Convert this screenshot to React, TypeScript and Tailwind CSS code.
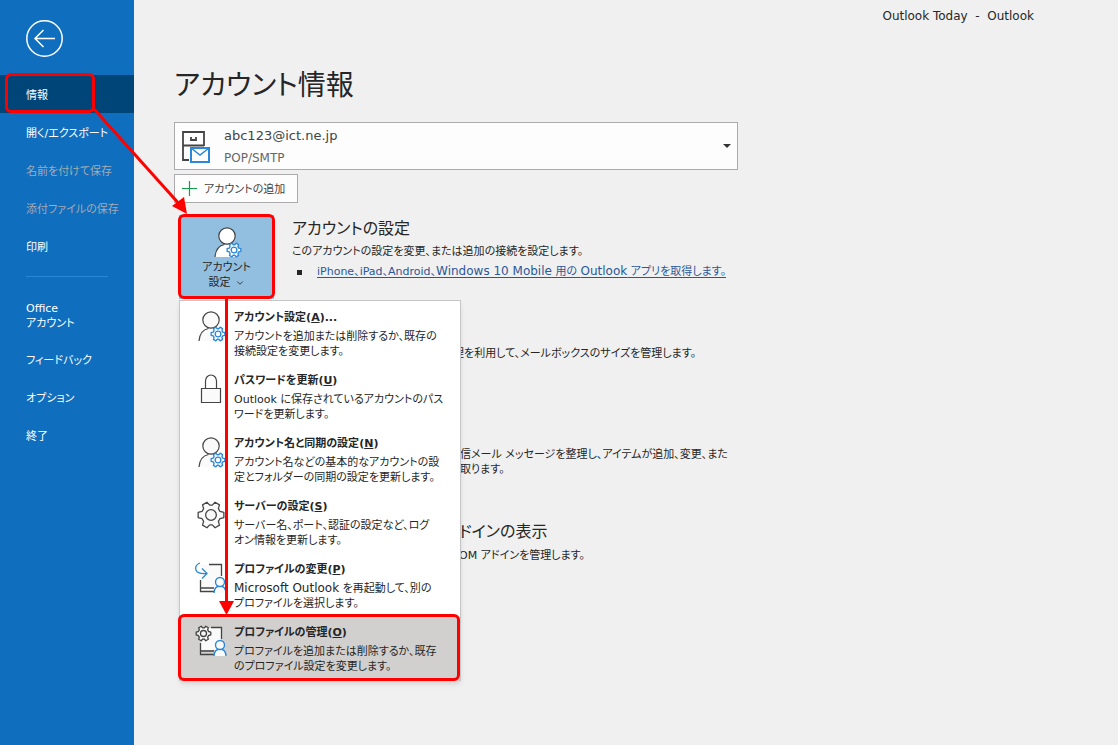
import type { ReactNode } from "react"
import { ChevronDown } from "lucide-react"

interface MenuEntry {
  id: string
  title: string
  accessKey: string
  suffix?: string
  lines: [ReactNode, string]
  icon: ReactNode
}

const GEAR_PATH =
  "M11.6 2h4.8l.9 3.6 2.6 1.5 3.6-1 2.4 4.1-2.7 2.6v2.4l2.7 2.6-2.4 4.1-3.6-1-2.6 1.5-.9 3.6h-4.8l-.9-3.6-2.6-1.5-3.6 1-2.4-4.1 2.7-2.6v-2.4L2.1 10.200l2.400-4.100 3.600 1 2.600-1.500z"

function Gear({ x, y, size, stroke, fill, width }: { x: number; y: number; size: number; stroke: string; fill: string; width: number }) {
  return (
    <svg x={x} y={y} width={size} height={size} viewBox="0 0 28 28" fill={fill} stroke={stroke} strokeWidth={width} strokeLinejoin="round">
      <path d={GEAR_PATH} transform="rotate(90 14 14)" />
      <circle cx="14" cy="14" r="5" />
    </svg>
  )
}

function PersonGearIcon({ fill = "#fafafa" }: { fill?: string }) {
  return (
    <svg width="32" height="33" viewBox="0 0 32 33" fill={fill} stroke="#444" strokeWidth="1.2" aria-hidden="true">
      <path d="M4 31c.6-7 4-11.500 9-12.500h5c3 .5 5 2 6 4V31z" stroke="none" />
      <path d="M4 31c.6-7 4-11.500 9.500-12.500M18.500 18.500c1.600.3 2.800.8 3.800 1.600" fill="none" />
      <circle cx="16" cy="10" r="8.200" />
      <Gear x={15} y={16} size={16} stroke="#2b88d8" fill="#fff" width={2.4} />
    </svg>
  )
}

function LockIcon() {
  return (
    <svg width="32" height="32" viewBox="0 0 32 32" fill="none" stroke="#444" strokeWidth="1.2" aria-hidden="true">
      <path d="M10.500 15V8a5.500 6 0 0 1 11 0v7" />
      <path d="M6.500 15.500h19v14h-19z" fill="#fafafa" />
    </svg>
  )
}

function ServerGearIcon() {
  return (
    <svg width="32" height="32" viewBox="0 0 32 32" aria-hidden="true">
      <Gear x={1} y={1} size={30} stroke="#444" fill="#fafafa" width={1.2} />
    </svg>
  )
}

function SmallPerson() {
  return (
    <g stroke="#2b88d8" strokeWidth="1.400" fill="#fafafa">
      <path d="M19 31c.3-4.500 2.500-7 6-7s5.700 2.500 6 7" />
      <circle cx="25" cy="20" r="4.500" />
    </g>
  )
}

function SwitchProfileIcon() {
  return (
    <svg width="32" height="33" viewBox="0 0 32 33" fill="none" stroke="#444" strokeWidth="1.300" aria-hidden="true">
      <path d="M6 3h20v22H6z" fill="#fafafa" stroke="none" />
      <path d="M14 2.500h12.500V14M5.500 18v11.500H19M5.500 26H19" />
      <path d="M5 1C1.500 2 0 5 1 8s4 4 10.500 3.500M7 6.500l5 5-5 5" stroke="#2b88d8" />
      <SmallPerson />
    </svg>
  )
}

function ManageProfileIcon() {
  return (
    <svg width="32" height="33" viewBox="0 0 32 33" fill="none" stroke="#444" strokeWidth="1.300" aria-hidden="true">
      <path d="M6 3h20v22H6z" fill="#fafafa" stroke="none" />
      <path d="M16 2.500h10.500V14M5.500 18v11.500H19M5.500 26H19" />
      <Gear x={0} y={0} size={17} stroke="#444" fill="#fafafa" width={2.2} />
      <SmallPerson />
    </svg>
  )
}

function MailboxIcon() {
  return (
    <svg width="30" height="34" viewBox="0 0 30 34" fill="none" aria-hidden="true">
      <path d="M8 30H2V2h21v14M2 15.500h21M10 7v3h5V7" stroke="#444" strokeWidth="1.800" />
      <path d="M10 18h18v14H10z" fill="#fff" stroke="#2b88d8" strokeWidth="2" />
      <path d="M10 18l9 7 9-7" stroke="#2b88d8" strokeWidth="1.500" />
    </svg>
  )
}

const navItems = [
  { label: "情報", active: true },
  { label: "開く/エクスポート" },
  { label: "名前を付けて保存", disabled: true },
  { label: "添付ファイルの保存", disabled: true },
  { label: "印刷" },
]

const menuEntries: MenuEntry[] = [
  {
    id: "account",
    title: "アカウント設定",
    accessKey: "A",
    suffix: "...",
    lines: ["アカウントを追加または削除するか、既存の", "接続設定を変更します。"],
    icon: <PersonGearIcon />,
  },
  {
    id: "password",
    title: "パスワードを更新",
    accessKey: "U",
    lines: ["Outlook に保存されているアカウントのパス", "ワードを更新します。"],
    icon: <LockIcon />,
  },
  {
    id: "sync",
    title: "アカウント名と同期の設定",
    accessKey: "N",
    lines: ["アカウント名などの基本的なアカウントの設", "定とフォルダーの同期の設定を更新します。"],
    icon: <PersonGearIcon />,
  },
  {
    id: "server",
    title: "サーバーの設定",
    accessKey: "S",
    lines: ["サーバー名、ポート、認証の設定など、ログ", "オン情報を更新します。"],
    icon: <ServerGearIcon />,
  },
  {
    id: "switch",
    title: "プロファイルの変更",
    accessKey: "P",
    lines: [
      <>
        <span className="text-xs leading-none">Microsoft Outlook</span> を再起動して、別の
      </>,
      "プロファイルを選択します。",
    ],
    icon: <SwitchProfileIcon />,
  },
  {
    id: "manage",
    title: "プロファイルの管理",
    accessKey: "O",
    lines: ["プロファイルを追加または削除するか、既存", "のプロファイル設定を変更します。"],
    icon: <ManageProfileIcon />,
  },
]

function Sidebar() {
  return (
    <nav className="w-[134px] shrink-0 bg-[#106ebe] text-white">
      <button aria-label="戻る" className="mt-5 ml-[26px] block">
        <svg width="37" height="37" viewBox="0 0 37 37" fill="none" stroke="#fff" strokeWidth="1.500">
          <circle cx="18.500" cy="18.500" r="17.700" />
          <path d="M29 18.500H9M17.500 10L9 18.500l8.500 8.500" />
        </svg>
      </button>
      <ul className="mt-[18px]">
        {navItems.map((item) => (
          <li key={item.label} className="relative">
            <button
              disabled={item.disabled}
              className={`flex h-[38px] w-full items-center pt-1 pl-[26px] text-left ${
                item.active ? "bg-[#004578]" : item.disabled ? "text-[#a3abb3]" : ""
              }`}
            >
              {item.label}
            </button>
            {item.active && (
              <span className="pointer-events-none absolute -top-0.5 left-[5px] h-10 w-[90px] rounded-md border-3 border-[#ff0000]" />
            )}
          </li>
        ))}
      </ul>
      <hr className="mt-[11px] mr-[26px] ml-[26px] border-[#2b88d8]" />
      <ul className="mt-[15px]">
        <li>
          <button className="block h-12 w-full pl-[26px] text-left leading-[15px]">
            Office
            <br />
            アカウント
          </button>
        </li>
        {["フィードバック", "オプション", "終了"].map((label) => (
          <li key={label}>
            <button className="flex h-[38px] w-full items-center pt-1 pl-[26px] text-left">{label}</button>
          </li>
        ))}
      </ul>
    </nav>
  )
}

function AccountMenu() {
  return (
    <div role="menu" className="absolute top-full left-0 z-10 mt-px w-[282px] border border-[#c6c6c6] bg-white pt-px shadow-md">
      {menuEntries.map((entry) => {
        const selected = entry.id === "manage"
        return (
          <button
            key={entry.id}
            role="menuitem"
            className={`relative flex h-[63px] w-full items-start pl-[15px] text-left ${selected ? "bg-[#d2d0ce]" : ""}`}
          >
            <span className="mt-2 w-[39px] shrink-0">{entry.icon}</span>
            <span className="pt-[7px]">
              <span className="block leading-[18px] font-bold">
                {entry.title}(<u>{entry.accessKey}</u>){entry.suffix}
              </span>
              <span className="mt-0.5 block leading-[15px]">
                {entry.lines[0]}
                <br />
                {entry.lines[1]}
              </span>
            </span>
            {selected && (
              <span className="pointer-events-none absolute -top-[3px] right-0 -bottom-px -left-0.5 rounded-md border-3 border-[#ff0000]" />
            )}
          </button>
        )
      })}
    </div>
  )
}

export default function App() {
  return (
    <div className="relative flex min-h-screen bg-[#f0f0f0] font-['DejaVu_Sans','Noto_Sans_CJK_JP',sans-serif] text-[11px] whitespace-nowrap text-[#262626] [font-feature-settings:'palt']">
      <Sidebar />
      <main className="min-w-0 flex-1 pl-10">
        <header className="flex justify-end pt-2 pr-[84px] text-xs whitespace-pre">Outlook Today  -  Outlook</header>
        <h1 className="mt-[38px] text-[28px] leading-[48px]">アカウント情報</h1>

        <div className="relative mt-3 h-12 max-w-[564px]">
          <select
            aria-label="アカウント"
            className="h-full w-full appearance-none border border-[#ababab] bg-[#fdfdfd] pb-5 pl-[49px] text-[13px] text-[#444]"
          >
            <option>abc123@ict.ne.jp</option>
          </select>
          <span className="pointer-events-none absolute top-2 left-[7px]">
            <MailboxIcon />
          </span>
          <span className="pointer-events-none absolute top-7 left-[50px] text-xs leading-4 text-[#666]">POP/SMTP</span>
          <svg className="pointer-events-none absolute top-[22px] right-[7px]" width="8" height="4" viewBox="0 0 8 4" fill="#333">
            <path d="M0 0h8L4 4z" />
          </svg>
        </div>

        <button className="mt-1 flex h-[29px] w-[124px] items-center gap-1.5 border border-[#ababab] bg-[#fdfdfd] pl-[7px] text-[#444]">
          <svg width="16" height="16" viewBox="0 0 16 16" stroke="#10a04a" strokeWidth="1.200" aria-hidden="true">
            <path d="M0 7.500h15M7.500 0v15" />
          </svg>
          <span className="pt-1">アカウントの追加</span>
        </button>

        <section className="mt-3 flex h-[84px] gap-[18px] pl-[5px]">
          <div className="relative w-[95px] shrink-0">
            <button aria-haspopup="menu" aria-expanded="true" className="flex h-full w-full flex-col items-center bg-[#92bfe0] pt-[11px] leading-[15px]">
              <PersonGearIcon fill="#fff" />
              <span className="mt-px">アカウント</span>
              <span className="flex items-center gap-1">
                設定
                <ChevronDown className="size-2.5" />
              </span>
            </button>
            <span className="pointer-events-none absolute -inset-px bottom-0 rounded-md border-3 border-[#ff0000]" />
            <AccountMenu />
          </div>
          <div className="pt-0.5">
            <h2 className="text-base leading-6">アカウントの設定</h2>
            <p className="mt-px leading-5">このアカウントの設定を変更、または追加の接続を設定します。</p>
            <ul>
              <li className="flex items-center leading-5">
                <span className="mr-[15px] ml-[5px] size-[5px] bg-[#262626]" />
                <a href="#apps" className="text-[#2b579a] underline underline-offset-2">
                  iPhone、iPad、Android、<span className="text-xs">Windows 10 Mobile</span> 用の{" "}
                  <span className="text-xs">Outlook</span> アプリを取得します。
                </a>
              </li>
            </ul>
          </div>
        </section>

        <section className="mt-[45px] pl-[279px]">
          <p className="leading-5">理を利用して、メールボックスのサイズを管理します。</p>
        </section>
        <section className="mt-[83px] pl-[286px]">
          <p className="leading-[15px]">
            信メール メッセージを整理し、アイテムが追加、変更、また
            <br />
            取ります。
          </p>
        </section>
        <section className="mt-[43px] pl-[285px]">
          <h2 className="text-base leading-6">ドインの表示</h2>
          <p className="mt-0.5 leading-5">OM アドインを管理します。</p>
        </section>
      </main>

      {/* callout arrows */}
      <svg className="pointer-events-none absolute top-0 left-0 z-20" width="240" height="620" viewBox="0 0 240 620" fill="#f00" stroke="#f00" aria-hidden="true">
        <path d="M94 109L181 206" strokeWidth="3" />
        <path d="M187 214L172 206L184 197z" stroke="none" />
        <path d="M226.500 299V604" strokeWidth="3" />
        <path d="M219 601h15l-7.500 14z" stroke="none" />
      </svg>
    </div>
  )
}
